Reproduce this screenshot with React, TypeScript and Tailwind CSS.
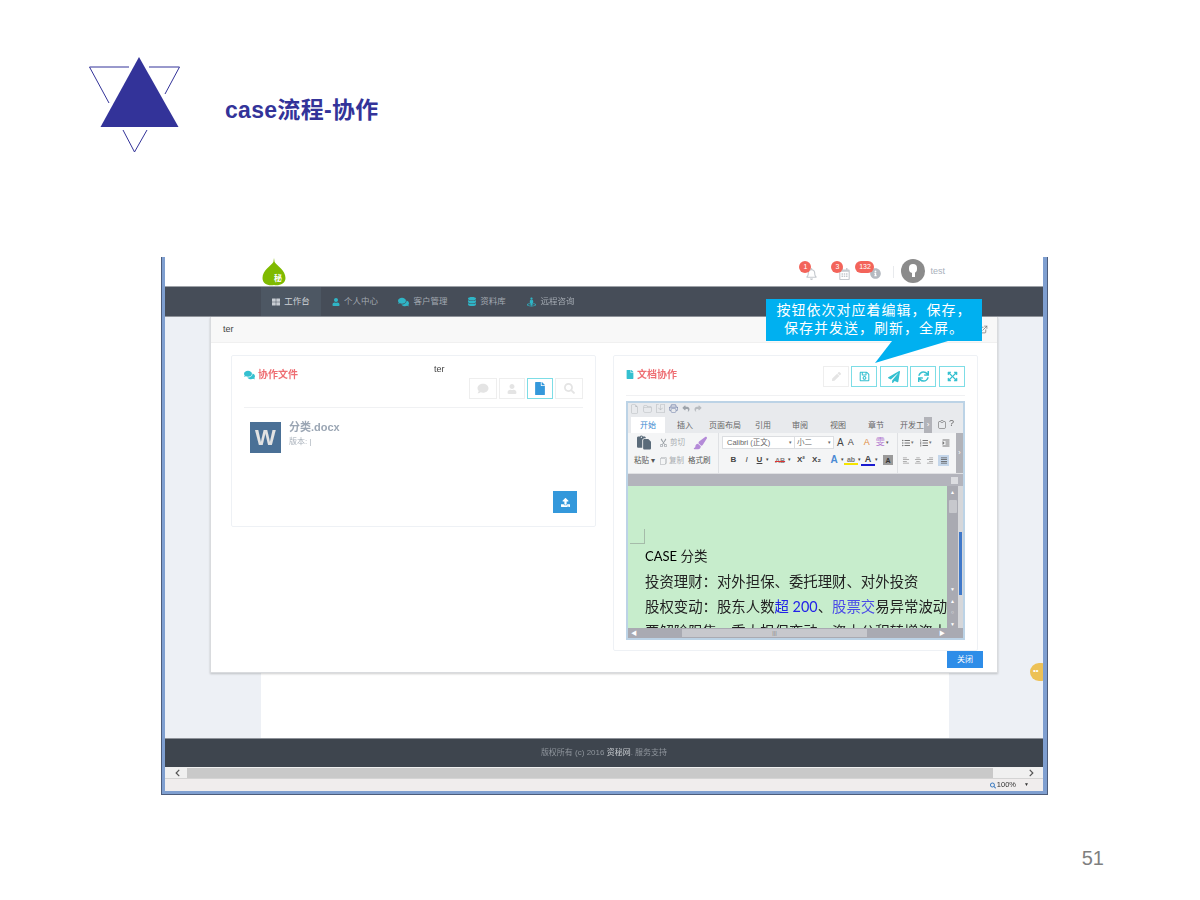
import {
  FaAlignCenter,
  FaAlignJustify,
  FaAlignLeft,
  FaAlignRight,
  FaChevronLeft,
  FaChevronRight,
  FaComment,
  FaComments,
  FaDatabase,
  FaExpandArrowsAlt,
  FaFile,
  FaIndent,
  FaInfoCircle,
  FaListOl,
  FaListUl,
  FaPaperPlane,
  FaPen,
  FaRegBell,
  FaRegCalendarAlt,
  FaRegSave,
  FaSearch,
  FaStreetView,
  FaSync,
  FaThLarge,
  FaUpload,
  FaUser,
} from "react-icons/fa";
import { FiExternalLink } from "react-icons/fi";
import { BsClipboard, BsScissors, BsFiles, BsPrinter, BsFolder2Open, BsFileEarmark, BsSave } from "react-icons/bs";
import { FaReply, FaShare, FaPaintbrush, FaPaste } from "react-icons/fa6";

const navItems = [
  { label: "个人中心", icon: <FaUser className="w-[8px] h-[8px] text-[#2fb5c6]" />, w: "w-[68px]" },
  { label: "客户管理", icon: <FaComments className="w-[11px] h-[10px] text-[#2fb5c6]" />, w: "w-[68px]" },
  { label: "资料库", icon: <FaDatabase className="w-[8px] h-[9px] text-[#2fb5c6]" />, w: "w-[60px]" },
  { label: "远程咨询", icon: <FaStreetView className="w-[9px] h-[10px] text-[#2fb5c6]" />, w: "w-[68px]" },
];

function Logo() {
  return (
    <svg width="94" height="98" viewBox="88 56 94 98" className="shrink-0">
      <polygon points="139,57 100.5,127 178.5,127" fill="#333399" />
      <path d="M129 67 H89.5 L109 103" fill="none" stroke="#333399" strokeWidth="1" />
      <path d="M149 67 H179.5 L165 94" fill="none" stroke="#333399" strokeWidth="1" />
      <path d="M123 130 L134.5 152 L147 130" fill="none" stroke="#333399" strokeWidth="1" />
    </svg>
  );
}

function Badge({ text, className }: { text: string; className: string }) {
  return (
    <span className={`absolute -top-[1px] h-[12px] rounded-full bg-[#f3645a] text-white text-[7px] leading-[12px] text-center ${className}`}>
      {text}
    </span>
  );
}

function TopBar() {
  return (
    <div className="h-[30px] bg-white border-b border-[#9ea2a8] flex items-center">
      <div className="ml-[97px] w-[24px] h-[29px] flex items-end">
        <svg width="24" height="28" viewBox="0 0 24 28">
          <path d="M12 0 L12.6 4 C15 8 23.5 12 23.5 20 C23.5 26 17 28 12 27 C6 28 0.5 26 0.5 20 C0.5 12 9 8 11.4 4 Z" fill="#7fba00" />
          <text x="12" y="23" fontSize="8" fill="#fff" fontWeight="700">秘</text>
        </svg>
      </div>
      <div className="ml-auto mr-[98px] flex items-center">
        <div className="relative w-[24px] h-[20px] flex items-center justify-end">
          <FaRegBell className="w-[11px] h-[12px] text-[#c5c9ce] mt-[4px]" />
          <Badge text="1" className="left-[6px] w-[12px]" />
        </div>
        <div className="relative w-[33px] h-[20px] flex items-center justify-end">
          <FaRegCalendarAlt className="w-[11px] h-[12px] text-[#c5c9ce] mt-[4px]" />
          <Badge text="3" className="left-[14px] w-[12px]" />
        </div>
        <div className="relative w-[31px] h-[20px] flex items-center justify-end">
          <FaInfoCircle className="w-[11px] h-[11px] text-[#b5bac1] mt-[4px]" />
          <Badge text="132" className="left-[5px] w-[19px]" />
        </div>
        <div className="ml-[12px] w-px h-[12px] bg-[#e8eaed]" />
        <div className="ml-[7px] -mt-[2px] w-[24px] h-[24px] rounded-full bg-[#8b8b8b] flex flex-col items-center justify-center">
          <div className="w-[8px] h-[9px] rounded-full bg-white" />
          <div className="w-[3px] h-[5px] bg-white -mt-[1px]" />
        </div>
        <span className="ml-[5px] text-[9px] text-[#a9b1bb]">test</span>
      </div>
    </div>
  );
}

function NavBar() {
  return (
    <div className="h-[30px] bg-[#464d58] border-b border-[#8e9299] flex pl-[96px] text-[8.5px] text-[#a3a9b1]">
      <div className="w-[60px] bg-[#4d5763] flex items-center justify-center gap-[4px] text-[#d0d4d8]">
        <FaThLarge className="w-[8px] h-[8px] text-[#c7ccd2]" />
        工作台
      </div>
      {navItems.map((item) => (
        <div key={item.label} className={`${item.w} flex items-center justify-center gap-[4px]`}>
          {item.icon}
          {item.label}
        </div>
      ))}
    </div>
  );
}

function SquareBtn({ children, active, w }: { children: React.ReactNode; active?: boolean; w: string }) {
  return (
    <div className={`${w} h-[21px] border flex items-center justify-center bg-white ${active ? "border-[#7ddde6]" : "border-[#eeeeee]"}`}>
      {children}
    </div>
  );
}

function FilesPanel() {
  return (
    <div className="w-[365px] h-[172px] border border-[#eef1f5] rounded-[2px] px-[12px] flex flex-col">
      <div className="relative h-[52px] border-b border-[#f0f1f3]">
        <div className="absolute left-0 top-[11px] flex items-center gap-[3px] text-[10px] font-bold text-[#ee6e73]">
          <FaComments className="w-[11px] h-[10px] text-[#34c0d0]" />
          协作文件
        </div>
        <span className="absolute left-[190px] top-[7px] text-[9px] text-[#444]">ter</span>
        <div className="absolute right-0 top-[22px] flex gap-[2px]">
          <SquareBtn w="w-[28px]"><FaComment className="w-[12px] h-[11px] text-[#e4e4e4]" /></SquareBtn>
          <SquareBtn w="w-[26px]"><FaUser className="w-[10px] h-[10px] text-[#e4e4e4]" /></SquareBtn>
          <SquareBtn w="w-[26px]" active><FaFile className="w-[10px] h-[13px] text-[#3498db]" /></SquareBtn>
          <SquareBtn w="w-[28px]"><FaSearch className="w-[11px] h-[11px] text-[#e4e4e4]" /></SquareBtn>
        </div>
      </div>
      <div className="flex mt-[14px] ml-[6px]">
        <div className="w-[31px] h-[31px] bg-[#4a7096] flex items-center justify-center text-[22px] font-bold text-[#e2e2e2] leading-none">W</div>
        <div className="ml-[8px] -mt-[3px]">
          <div className="text-[11px] font-bold text-[#9ba6b4] leading-[16px]">分类.docx</div>
          <div className="text-[8px] text-[#a9b1bb] leading-[12px] mt-[1px]">版本: |</div>
        </div>
      </div>
      <div className="mt-[38px] self-end mr-[6px] w-[24px] h-[22px] bg-[#3498db] flex items-center justify-center">
        <FaUpload className="w-[9px] h-[9px] text-white" />
      </div>
    </div>
  );
}

function ToolGlyph({ children, className = "" }: { children: React.ReactNode; className?: string }) {
  return <span className={`flex items-center justify-center leading-none ${className}`}>{children}</span>;
}

function Ribbon() {
  return (
    <div className="h-[40px] bg-[#f4f5f6] flex text-[7.5px] text-[#555] relative overflow-hidden">
      {/* clipboard group */}
      <div className="w-[91px] shrink-0 flex flex-col pl-[6px] border-r border-[#dfe1e4]">
        <div className="h-[19px] flex items-center">
          <FaPaste className="w-[14px] h-[15px] text-[#5a6b7a] ml-[3px]" />
          <BsScissors className="w-[9px] h-[9px] text-[#9aa0a6] ml-[8px]" />
          <span className="ml-[2px] text-[#a8acb0]">剪切</span>
          <FaPaintbrush className="w-[14px] h-[14px] text-[#b48ad8] ml-[8px]" />
        </div>
        <div className="h-[17px] flex items-center">
          <span>粘贴 ▾</span>
          <BsFiles className="w-[8px] h-[8px] text-[#a8acb0] ml-[4px]" />
          <span className="ml-[2px] text-[#a8acb0]">复制</span>
          <span className="ml-[4px]">格式刷</span>
        </div>
      </div>
      {/* font group */}
      <div className="w-[179px] shrink-0 pl-[3px] flex flex-col border-r border-[#dfe1e4]">
        <div className="h-[19px] flex items-center">
          <div className="w-[73px] h-[13px] border border-[#dcdee1] bg-white pl-[4px] flex items-center justify-between pr-[2px] text-[#666]">
            Calibri (正文)<span className="text-[5px]">▾</span>
          </div>
          <div className="w-[39px] h-[13px] border border-l-0 border-[#dcdee1] bg-white pl-[2px] flex items-center justify-between pr-[2px] text-[#666]">
            小二<span className="text-[5px]">▾</span>
          </div>
          <span className="ml-[3px] text-[10px] text-[#444]">A</span>
          <span className="ml-[4px] text-[9px] text-[#444]">A</span>
          <span className="ml-[10px] text-[9px] text-[#e08a3c]">A</span>
          <span className="ml-[6px] text-[9px] text-[#b37ad0]">雯</span>
          <span className="ml-[1px] text-[5px]">▾</span>
        </div>
        <div className="h-[16px] flex items-center text-[8px] font-bold text-[#444] pl-[5px]">
          <ToolGlyph className="w-[13px]">B</ToolGlyph>
          <ToolGlyph className="w-[13px] italic font-normal">I</ToolGlyph>
          <ToolGlyph className="w-[13px] underline">U</ToolGlyph>
          <span className="text-[5px] font-normal">▾</span>
          <ToolGlyph className="w-[16px] ml-[3px] text-[7px] text-[#888] line-through decoration-[#d33]">AB</ToolGlyph>
          <span className="text-[5px] font-normal">▾</span>
          <ToolGlyph className="w-[16px] ml-[2px]">X²</ToolGlyph>
          <ToolGlyph className="w-[15px]">X₂</ToolGlyph>
          <ToolGlyph className="w-[14px] ml-[3px] text-[10px] text-[#4a8ad4]">A</ToolGlyph>
          <span className="text-[5px] font-normal">▾</span>
          <ToolGlyph className="w-[14px] text-[7px] border-b-2 border-[#f5e400] h-[10px] text-[#777]">ab</ToolGlyph>
          <span className="text-[5px] font-normal">▾</span>
          <ToolGlyph className="w-[14px] text-[9px] border-b-2 border-[#1a1ad0] h-[11px]">A</ToolGlyph>
          <span className="text-[5px] font-normal">▾</span>
          <ToolGlyph className="w-[10px] h-[10px] ml-[5px] bg-[#9a9a9a] text-[7px] text-[#333]">A</ToolGlyph>
        </div>
      </div>
      {/* paragraph group */}
      <div className="flex-1 pl-[4px] flex flex-col text-[#777]">
        <div className="h-[19px] flex items-center">
          <FaListUl className="w-[8px] h-[8px]" />
          <span className="text-[5px] ml-[1px]">▾</span>
          <FaListOl className="w-[8px] h-[8px] ml-[6px]" />
          <span className="text-[5px] ml-[1px]">▾</span>
          <FaIndent className="w-[8px] h-[8px] ml-[10px]" />
        </div>
        <div className="h-[16px] flex items-center gap-[4px]">
          <FaAlignLeft className="w-[8px] h-[7px] text-[#999]" />
          <FaAlignCenter className="w-[8px] h-[7px] text-[#999]" />
          <FaAlignRight className="w-[8px] h-[7px] text-[#999]" />
          <span className="w-[11px] h-[11px] bg-[#c4d6ea] flex items-center justify-center">
            <FaAlignJustify className="w-[8px] h-[7px] text-[#555]" />
          </span>
        </div>
      </div>
      <div className="absolute right-0 top-0 w-[7px] h-full bg-[#b2b3b9] text-white text-[7px] leading-[40px] text-center">›</div>
    </div>
  );
}

function DocEditor() {
  return (
    <div className="mt-[5px] w-[339px] h-[239px] border-2 border-[#bcd3e6] bg-[#dfe3e8] flex flex-col overflow-hidden font-['Liberation_Sans','Noto_Sans_CJK_SC',sans-serif]">
      {/* quick access row */}
      <div className="h-[13px] bg-[#e8eaed] flex items-center gap-[4px] pl-[2px] pb-[2px]">
        <BsFileEarmark className="w-[9px] h-[10px] text-[#b8bcc0]" />
        <BsFolder2Open className="w-[9px] h-[9px] text-[#b8bcc0]" />
        <BsSave className="w-[9px] h-[9px] text-[#b8bcc0]" />
        <BsPrinter className="w-[9px] h-[9px] text-[#6a7aa5]" />
        <FaReply className="w-[8px] h-[7px] text-[#9da3aa]" />
        <FaShare className="w-[8px] h-[7px] text-[#b8bcc0]" />
      </div>
      {/* tab row */}
      <div className="h-[17px] bg-[#e8eaed] flex items-end text-[8px] text-[#666] pl-[3px]">
        <div className="w-[34px] h-[16px] bg-white text-[#3a8ad0] flex items-center justify-center pt-[1px]">开始</div>
        <div className="w-[40px] h-[16px] flex items-center justify-center pt-[1px]">插入</div>
        <div className="w-[40px] h-[16px] flex items-center justify-center pt-[1px]">页面布局</div>
        <div className="w-[36px] h-[16px] flex items-center justify-center pt-[1px]">引用</div>
        <div className="w-[38px] h-[16px] flex items-center justify-center pt-[1px]">审阅</div>
        <div className="w-[38px] h-[16px] flex items-center justify-center pt-[1px]">视图</div>
        <div className="w-[38px] h-[16px] flex items-center justify-center pt-[1px]">章节</div>
        <div className="ml-[5px] w-[24px] h-[16px] flex items-center justify-center whitespace-nowrap pt-[1px]">开发工</div>
        <div className="w-[8px] h-[16px] bg-[#b2b3b9] text-white flex items-center justify-center">›</div>
        <BsClipboard className="w-[8px] h-[9px] text-[#555] ml-[6px] mb-[4px]" />
        <span className="ml-[3px] mb-[3px] text-[9px]">?</span>
      </div>
      <Ribbon />
      <div className="h-[13px] bg-[#b3b4bc] border-t border-[#dfe0e3] flex justify-end pr-[5px] pt-[3px]">
        <span className="w-[7px] h-[7px] bg-[#dcdde1]" />
      </div>
      {/* document body */}
      <div className="h-[142px] shrink-0 flex">
        <div className="flex-1 bg-[#c7edcc] overflow-hidden">
          <div className="mt-[43px] ml-[2px] w-[15px] h-[15px] border-r border-b border-[#a5bba9]" />
          <div className="pl-[17px] text-[14.4px] leading-[25px] text-[#222] whitespace-nowrap font-['Lato','Noto_Sans_CJK_SC',sans-serif]">
            <div className="text-[13.5px]"><span className="text-[13px] text-black">CASE</span> 分类</div>
            <div>投资理财：对外担保、委托理财、对外投资</div>
            <div>
              股权变动：股东人数<span className="text-[#2323e8]">超 200</span>、<span className="text-[#4a4ae8]">股票交</span>易异常波动
            </div>
            <div>要解除限售、重大担保变动、资本公积转增资本</div>
          </div>
        </div>
        <div className="w-[11px] bg-[#a9aab2] flex flex-col items-center text-white text-[5px]">
          <span className="mt-[3px]">▲</span>
          <span className="mt-[3px] w-[8px] h-[16px] bg-[#c7c8cd] rounded-[1px]" />
          <span className="mt-[73px]">▼</span>
          <span className="mt-[4px]">▲</span>
          <span className="mt-[4px]">○</span>
          <span className="mt-[4px]">▼</span>
        </div>
        <div className="w-[5px] bg-[#d6d7da] relative">
          <div className="absolute left-[1px] top-[46px] w-[3px] h-[63px] bg-[#3f78c9]" />
        </div>
      </div>
      {/* horizontal scrollbar */}
      <div className="h-[10px] shrink-0 bg-[#a9aab2] flex items-center text-white text-[6px]">
        <span className="ml-[3px]">◀</span>
        <div className="ml-[45px] w-[185px] h-[8px] bg-[#c7c8cd] flex items-center justify-center text-[#888]">|||</div>
        <span className="ml-[72px]">▶</span>
      </div>
    </div>
  );
}

function CollabPanel() {
  return (
    <div className="w-[365px] h-[296px] border border-[#eef1f5] rounded-[2px] pl-[12px] flex flex-col">
      <div className="relative h-[40px] mr-[12px] border-b border-[#f0f1f3]">
        <div className="absolute left-0 top-[11px] flex items-center gap-[3px] text-[10px] font-bold text-[#ee6e73]">
          <FaFile className="w-[8px] h-[9px] text-[#34c0d0]" />
          文档协作
        </div>
        <div className="absolute right-0 top-[10px] flex">
          <SquareBtn w="w-[26px]"><FaPen className="w-[9px] h-[9px] text-[#e4e4e4]" /></SquareBtn>
          <SquareBtn w="w-[26px] ml-[2px]" active><FaRegSave className="w-[11px] h-[11px] text-[#34c0d0]" /></SquareBtn>
          <SquareBtn w="w-[28px] ml-[3px]" active><FaPaperPlane className="w-[12px] h-[12px] text-[#34c0d0]" /></SquareBtn>
          <SquareBtn w="w-[26px] ml-[2px]" active><FaSync className="w-[11px] h-[11px] text-[#34c0d0]" /></SquareBtn>
          <SquareBtn w="w-[26px] ml-[3px]" active><FaExpandArrowsAlt className="w-[11px] h-[11px] text-[#34c0d0]" /></SquareBtn>
        </div>
      </div>
      <DocEditor />
    </div>
  );
}

function Modal() {
  return (
    <div className="absolute left-[45px] top-0 w-[788px] h-[356px] bg-white border border-t-0 border-[#d9dbde] shadow-[0_1px_2px_rgba(0,0,0,0.2)] flex flex-col">
      <div className="h-[26px] bg-[#f8f8f8] border-b border-[#f0f0f0] flex items-center justify-between pl-[12px] pr-[9px]">
        <span className="text-[9px] text-[#444]">ter</span>
        <FiExternalLink className="w-[9px] h-[9px] text-[#777]" />
      </div>
      <div className="flex gap-[17px] pl-[20px] pt-[12px]">
        <FilesPanel />
        <CollabPanel />
      </div>
      <div className="flex justify-end pr-[14px]">
        <div className="w-[36px] h-[17px] bg-[#2e8de8] text-white text-[8px] flex items-center justify-center">关闭</div>
      </div>
    </div>
  );
}

function BrowserShot() {
  return (
    <div className="ml-[161px] w-[887px] h-[538px] border-x border-b border-[#4d5d7c] blur-[0.35px] font-['Liberation_Sans','Noto_Sans_CJK_SC',sans-serif]">
      <div className="h-full border-l-[3px] border-r-[4px] border-b-[3px] border-[#7f9fd0] flex flex-col">
        <TopBar />
        <NavBar />
        <div className="relative h-[421px] bg-[#edf0f5] flex overflow-hidden">
          <div className="ml-[96px] w-[688px] bg-white" />
          <Modal />
          <div className="absolute -right-[8px] top-[346px] w-[21px] h-[18px] rounded-full bg-[#edc156] text-white text-[8px] leading-[16px] pl-[3px]">••</div>
        </div>
        <div className="h-[29px] bg-[#3e454e] border-t border-[#8e9299] flex items-center justify-center text-[8px] text-[#8f959c]">
          版权所有 (c) 2016&nbsp;<span className="text-[#c8ccd0]">资秘网</span>. 服务支持
        </div>
        <div className="h-[11px] bg-[#f0f0f0] flex items-center text-[#555]">
          <span className="w-[22px] pl-[9px]"><FaChevronLeft className="w-[7px] h-[8px]" /></span>
          <div className="w-[806px] h-[10px] bg-[#c9c9c9]" />
          <span className="ml-[35px]"><FaChevronRight className="w-[7px] h-[8px]" /></span>
        </div>
        <div className="flex-1 bg-[#f0eded] border-t border-[#d4d4d4] flex items-center justify-end pr-[14px] text-[7.5px] text-[#333]">
          <FaSearch className="w-[6px] h-[7px] text-[#3a7ac0] mr-[1px]" />
          100%
          <span className="ml-[8px] text-[5px]">▼</span>
        </div>
      </div>
    </div>
  );
}

function Callout() {
  return (
    <div className="absolute left-[766px] top-[299px]">
      <div className="w-[216px] h-[42px] bg-[#00b0f0] text-white text-[14px] leading-[18px] tracking-[1px] text-center pt-[2px] font-['Liberation_Sans','Noto_Sans_CJK_SC',sans-serif]">
        <div>按钮依次对应着编辑，保存，</div>
        <div>保存并发送，刷新，全屏。</div>
      </div>
      <svg width="90" height="23" viewBox="0 0 90 23" className="absolute left-[100px] top-[42px]">
        <polygon points="26,0 9,22 82,0" fill="#00b0f0" />
      </svg>
    </div>
  );
}

export default function App() {
  return (
    <div className="relative w-[1200px] h-[900px] bg-white overflow-hidden font-['Liberation_Sans','Noto_Sans_CJK_SC',sans-serif]">
      <div className="h-[257px] flex pl-[88px] pt-[56px]">
        <Logo />
        <h1 className="ml-[43px] mt-[38px] text-[23px] leading-[32px] tracking-[0.3px] font-bold text-[#333399]">case流程-协作</h1>
      </div>
      <BrowserShot />
      <div className="flex justify-end pr-[96px] mt-[51px] text-[20px] leading-[24px] text-[#7f7f7f]">51</div>
      <Callout />
    </div>
  );
}
